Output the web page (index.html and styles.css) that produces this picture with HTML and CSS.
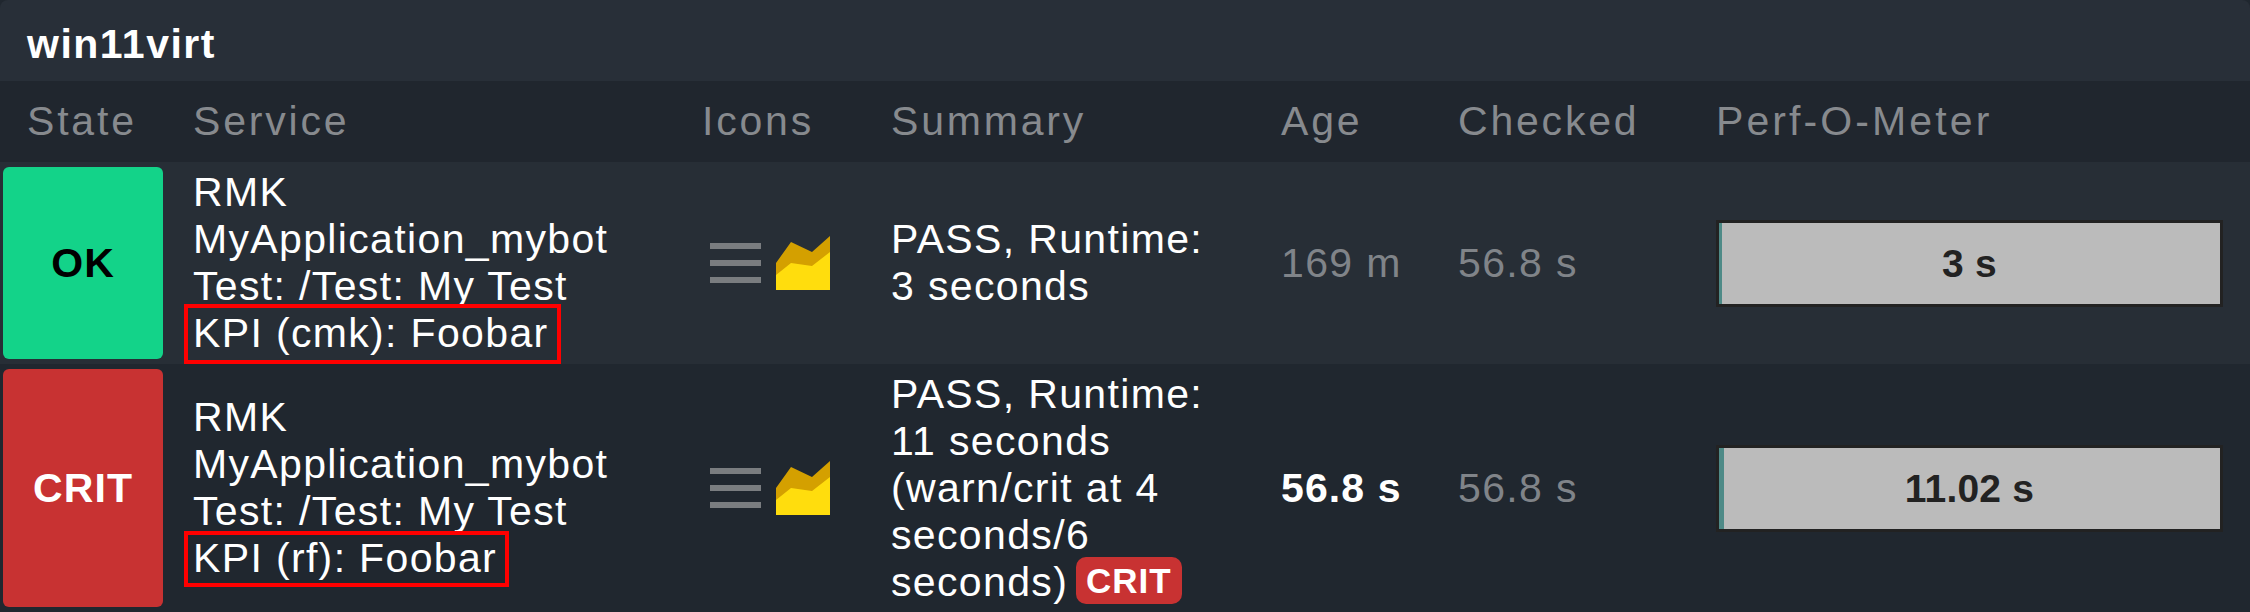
FILE: index.html
```html
<!DOCTYPE html>
<html lang="en">
<head>
<meta charset="utf-8">
<title>win11virt</title>
<link rel="stylesheet" href="styles.css">
</head>
<body>
<div class="host">win11virt</div>
<table class="services">
<colgroup><col class="c-state"><col class="c-service"><col class="c-icons"><col class="c-summary"><col class="c-age"><col class="c-checked"><col class="c-perf"></colgroup>
<thead><tr><th>State</th><th>Service</th><th>Icons</th><th>Summary</th><th>Age</th><th>Checked</th><th>Perf-O-Meter</th></tr></thead>
<tbody>
<tr class="row-ok">
<td class="state"><div class="pill ok">OK</div></td>
<td class="text">RMK MyApplication_mybot Test: /Test: My Test <span class="kpi kpi-cmk">KPI (cmk): Foobar</span></td>
<td><div class="icons">
<svg class="menu" width="51" height="40" viewBox="0 0 51 40"><rect y="0" width="51" height="6"/><rect y="17" width="51" height="6"/><rect y="34" width="51" height="6"/></svg>
<svg width="54" height="54" viewBox="0 0 54 54"><polygon class="g1" points="0,27 15,6 36,16 54,0 54,54 0,54"/><polygon class="g2" points="0,39 15,27 36,30 54,16 54,54 0,54"/></svg>
</div></td>
<td class="text">PASS, Runtime: 3 seconds</td>
<td class="muted">169 m</td>
<td class="muted">56.8 s</td>
<td><div class="meter"><div class="fill fill-a"></div><div class="value">3 s</div></div></td>
</tr>
<tr class="row-crit">
<td class="state"><div class="pill crit">CRIT</div></td>
<td class="text">RMK MyApplication_mybot Test: /Test: My Test <span class="kpi kpi-rf">KPI (rf): Foobar</span></td>
<td><div class="icons">
<svg class="menu" width="51" height="40" viewBox="0 0 51 40"><rect y="0" width="51" height="6"/><rect y="17" width="51" height="6"/><rect y="34" width="51" height="6"/></svg>
<svg width="54" height="54" viewBox="0 0 54 54"><polygon class="g1" points="0,27 15,6 36,16 54,0 54,54 0,54"/><polygon class="g2" points="0,39 15,27 36,30 54,16 54,54 0,54"/></svg>
</div></td>
<td class="text">PASS, Runtime: 11 seconds (warn/crit at 4 seconds/6 seconds) <span class="badge">CRIT</span></td>
<td class="strong">56.8 s</td>
<td class="muted">56.8 s</td>
<td><div class="meter"><div class="fill fill-b"></div><div class="value">11.02 s</div></div></td>
</tr>
</tbody>
</table>
</body>
</html>
```
FILE: styles.css
```css
* { box-sizing: border-box; }
html, body { margin: 0; padding: 0; background: #20272f; }
body {
  width: 2250px;
  height: 612px;
  overflow: hidden;
  font-family: "Liberation Sans", Arial, sans-serif;
  font-size: 41px;
  line-height: 47px;
  letter-spacing: 1.35px;
  color: #fff;
}
.host {
  height: 81px;
  padding: 21px 0 0 27px;
  background: #282f38;
  font-weight: 700;
  letter-spacing: 1.5px;
  border-radius: 8px 8px 0 0;
}
.services { width: 2250px; table-layout: fixed; border-collapse: collapse; }
.c-state { width: 166px; }
.c-service { width: 509px; }
.c-icons { width: 189px; }
.c-summary { width: 390px; }
.c-age { width: 177px; }
.c-checked { width: 257px; }
.c-perf { width: 562px; }
th {
  height: 81px;
  padding: 0 0 0 27px;
  background: #20262e;
  color: #878a8e;
  font-weight: 400;
  text-align: left;
  letter-spacing: 2.8px;
}
td { padding: 0 27px; vertical-align: middle; }
th:last-child, td:last-child { padding-left: 28px; }
th:last-child { letter-spacing: 3.1px; }
.row-ok { height: 202px; background: #272e36; }
.row-crit { height: 248px; background: #20272f; }
td.state { padding: 0 3px; }
.pill {
  display: flex;
  align-items: center;
  justify-content: center;
  border-radius: 6px;
  font-weight: 700;
  letter-spacing: 1.1px;
}
.ok { height: 192px; background: #13d389; color: #000; }
.crit { height: 238px; background: #c83232; color: #fff; }
.icons { display: flex; align-items: center; gap: 15px; padding-left: 8px; }
.menu rect { fill: #7a7d80; }
.g1 { fill: #d4a000; }
.g2 { fill: #ffdd0d; }
.kpi { display: block; width: fit-content; position: relative; }
.kpi::after { content: ""; position: absolute; border: 4px solid #f00; left: -9px; right: -12px; }
.kpi-cmk::after { top: -6px; bottom: -7px; }
.kpi-rf::after { top: -4px; bottom: -5px; }
.muted { color: #808489; }
.strong { font-weight: 700; letter-spacing: 1.1px; }
.badge {
  display: inline-block;
  margin: -3px 0 0 -5px;
  padding: 0 10px;
  vertical-align: 3px;
  border-radius: 10px;
  background: #c83232;
  font-size: 35px;
  line-height: 47px;
  font-weight: 700;
  letter-spacing: 1px;
}
.meter { display: flex; position: relative; height: 87px; border: 3px solid #222; background: #bbb; }
.fill { height: 100%; background: #4e8a87; }
.fill-a { width: 3px; }
.fill-b { width: 5px; }
.value {
  position: absolute;
  inset: 0;
  display: flex;
  align-items: center;
  justify-content: center;
  color: #222;
  font-size: 39px;
  font-weight: 700;
  letter-spacing: 0.2px;
}
```
